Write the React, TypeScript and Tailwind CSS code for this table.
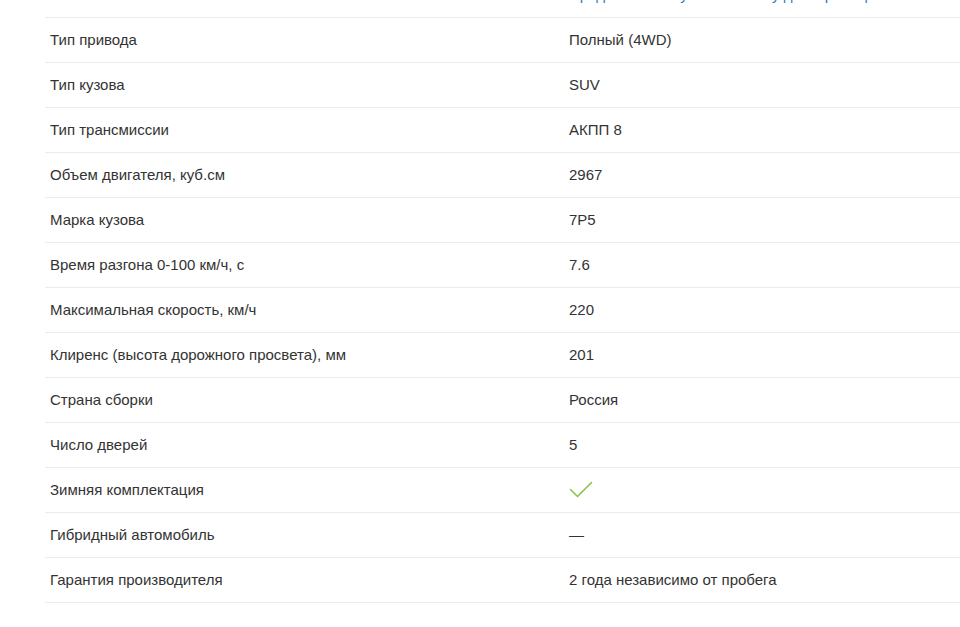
import React from 'react';

interface SpecRow {
  label: string;
  value: React.ReactNode;
}

const CheckMark = () => (
  <svg width="24" height="18" viewBox="0 0 24 18" fill="none" className="block">
    <path d="M1.5 8.5 L8.5 15.5 L22.5 1.5" stroke="#8bc34a" strokeWidth="1.6" strokeLinecap="round" strokeLinejoin="round" />
  </svg>
);

const rows: SpecRow[] = [
  { label: 'Тип привода', value: 'Полный (4WD)' },
  { label: 'Тип кузова', value: 'SUV' },
  { label: 'Тип трансмиссии', value: 'АКПП 8' },
  { label: 'Объем двигателя, куб.см', value: '2967' },
  { label: 'Марка кузова', value: '7P5' },
  { label: 'Время разгона 0-100 км/ч, с', value: '7.6' },
  { label: 'Максимальная скорость, км/ч', value: '220' },
  { label: 'Клиренс (высота дорожного просвета), мм', value: '201' },
  { label: 'Страна сборки', value: 'Россия' },
  { label: 'Число дверей', value: '5' },
  { label: 'Зимняя комплектация', value: <CheckMark /> },
  { label: 'Гибридный автомобиль', value: '—' },
  { label: 'Гарантия производителя', value: '2 года независимо от пробега' },
];

export default function App() {
  return (
    <div className="w-[960px] h-[627px] bg-white overflow-hidden font-['Liberation_Sans',Arial,sans-serif] text-[15px] text-[#333]">
      <div className="pl-[45px]">
        {/* верхняя строка, обрезанная краем экрана */}
        <div className="h-[18px] overflow-hidden border-b border-[#ebebeb] flex">
          <div className="w-[524px] shrink-0" />
          <div className="mt-[-14px] leading-[17px] text-[#2b7bc0] whitespace-nowrap">
            Предложение Hyundai Mobility для юр. лиц и ИП
          </div>
        </div>
        {rows.map((row) => (
          <div key={row.label} className="h-[45px] flex items-center border-b border-[#ebebeb]">
            <div className="w-[524px] shrink-0 pl-[5px]">{row.label}</div>
            <div className="flex items-center">{row.value}</div>
          </div>
        ))}
      </div>
    </div>
  );
}
